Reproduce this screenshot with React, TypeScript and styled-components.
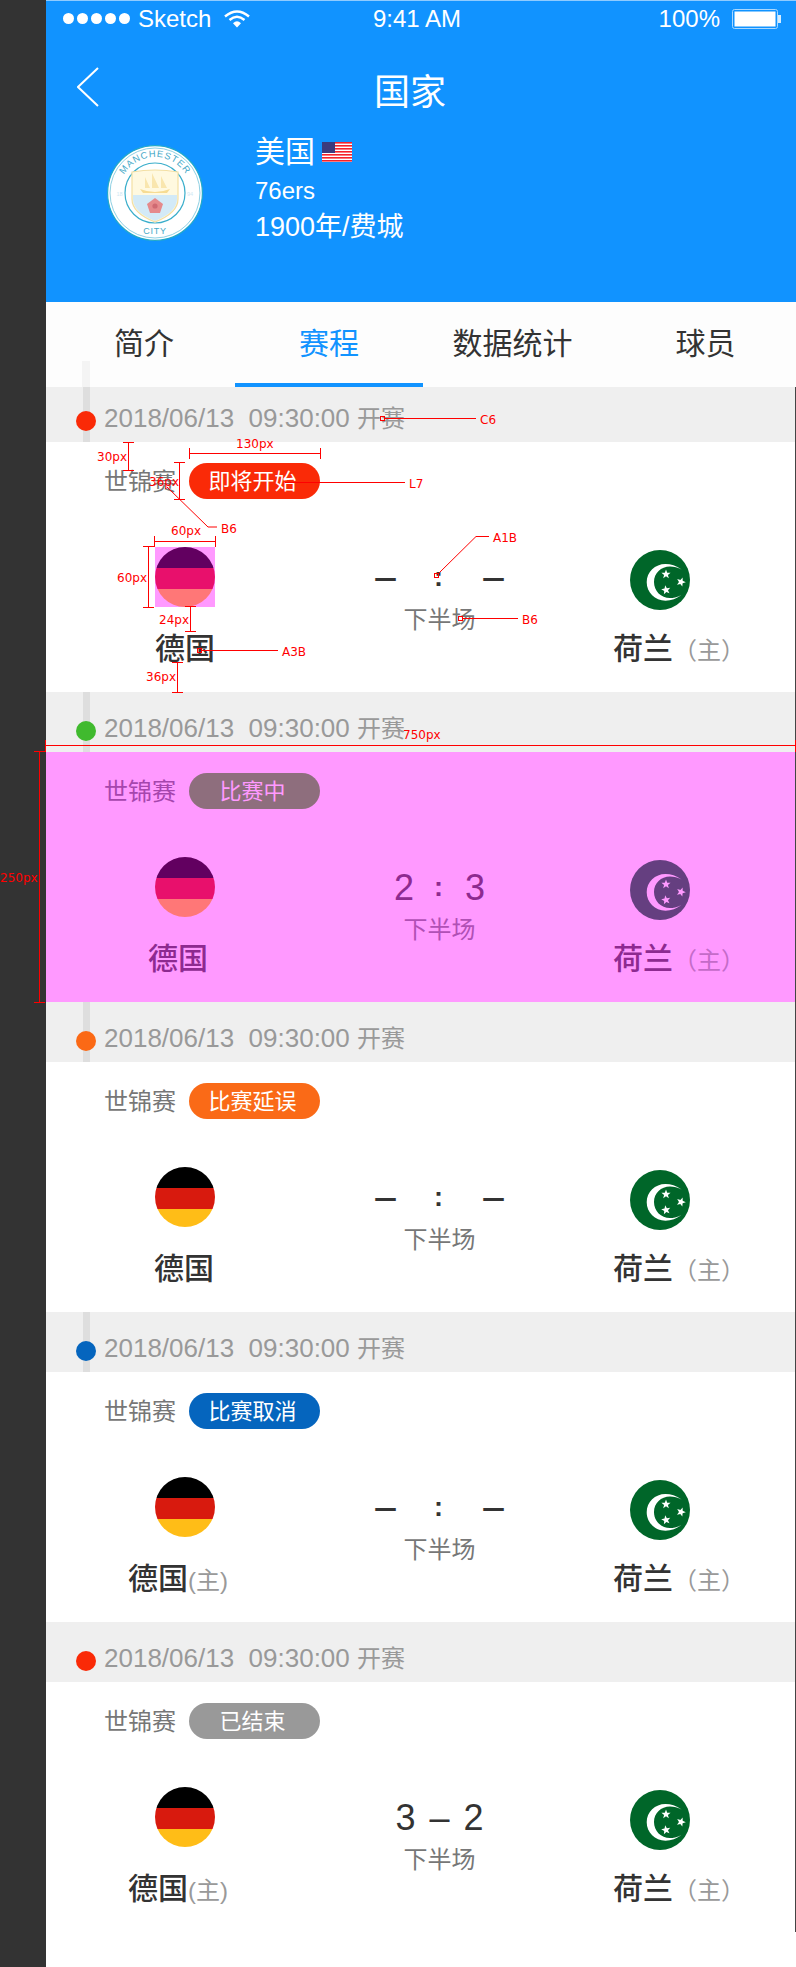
import React from 'react';
import styled, { createGlobalStyle } from 'styled-components';

const FONT = '"Liberation Sans", "Noto Sans CJK SC", sans-serif';

const GlobalStyle = createGlobalStyle`
  html, body { margin: 0; padding: 0; background: #333; }
  * { box-sizing: border-box; }
`;

const Page = styled.div`
  position: relative;
  width: 796px;
  height: 1967px;
  padding-left: 46px;
  background: #333;
  font-family: ${FONT};
  overflow: hidden;
`;

const Phone = styled.div`
  width: 750px;
  height: 1967px;
  background: #fff;
`;

const Header = styled.header`
  height: 302px;
  background: #1193ff;
  border-top: 1px solid #8fcbff;
  color: #fff;
`;

const StatusBar = styled.div`
  display: grid;
  grid-template-columns: 327px auto 1fr;
  align-items: center;
  height: 35px;
  margin-bottom: 2px;
  font-size: 24px;
`;

const StatusLeft = styled.div`
  display: flex;
  align-items: center;
  padding-left: 17px;
`;

const SignalDots = styled.div`
  display: flex;
  gap: 3px;
  margin-right: 8px;
`;

const SignalDot = styled.span`
  width: 11px;
  height: 11px;
  border-radius: 50%;
  background: #fff;
`;

const Carrier = styled.span`
  margin-right: 13px;
`;

const StatusRight = styled.div`
  display: flex;
  align-items: center;
  justify-content: flex-end;
  gap: 12px;
  padding-right: 15px;
`;

const Nav = styled.div`
  display: grid;
  grid-template-columns: 328px auto;
  height: 96px;
`;

const BackCell = styled.div`
  padding: 29px 0 0 31px;
`;

const Title = styled.h1`
  margin: 0;
  padding-top: 33px;
  font-size: 36px;
  line-height: 44px;
  font-weight: 400;
`;

const TeamHero = styled.div`
  display: flex;
  gap: 52px;
  padding-left: 61px;
`;

const LogoWrap = styled.div`
  width: 96px;
  height: 96px;
  margin-top: 11px;
`;

const HeroInfo = styled.div`
  display: flex;
  flex-direction: column;
`;

const HeroName = styled.div`
  display: flex;
  align-items: center;
  gap: 7px;
  font-size: 30px;
  line-height: 36px;
  margin-bottom: 1px;
`;

const HeroLine = styled.div<{ $size: number }>`
  margin-top: 4px;
  font-size: ${(p) => p.$size}px;
  line-height: 32px;
`;

const Tabs = styled.nav`
  position: relative;
  display: grid;
  grid-template-columns: 189px 188px 179px 194px;
  height: 85px;
  background: #fdfdfd;
  &::before {
    content: '';
    position: absolute;
    left: 36px;
    top: 59px;
    width: 8px;
    height: 26px;
    background: #f4f4f4;
  }
`;

const Tab = styled.div<{ $active?: boolean; $shift?: number }>`
  position: relative;
  padding: 24px 0 0 ${(p) => p.$shift ?? 0}px;
  text-align: center;
  font-size: 30px;
  line-height: 36px;
  color: ${(p) => (p.$active ? '#1193ff' : '#333')};
  border-bottom: 4px solid ${(p) => (p.$active ? '#1193ff' : 'transparent')};
`;

const Content = styled.main`
  border-right: 1px solid #444;
`;

const DateBar = styled.div<{ $first?: boolean; $line?: boolean }>`
  position: relative;
  display: flex;
  align-items: flex-end;
  height: ${(p) => (p.$first ? 55 : 60)}px;
  padding: 0 0 5px 30px;
  background: #efefef;
  &::before {
    content: '';
    display: ${(p) => (p.$line ? 'block' : 'none')};
    position: absolute;
    left: 37px;
    top: 0;
    width: 7px;
    height: 100%;
    background: #dedede;
  }
`;

const StatusDot = styled.span<{ $color: string }>`
  position: relative;
  width: 20px;
  height: 20px;
  margin: 0 8px 6px 0;
  border-radius: 50%;
  background: ${(p) => p.$color};
`;

const DateText = styled.span`
  position: relative;
  font-size: 26px;
  line-height: 36px;
  color: #999;
  white-space: pre;
  & > b {
    font-size: 24px;
    font-weight: 400;
  }
`;

const Row = styled.section<{ $tinted?: boolean }>`
  height: 250px;
  padding-top: 21px;
  background: ${(p) => (p.$tinted ? '#ff99ff' : '#fff')};
`;

const MetaRow = styled.div`
  display: flex;
  align-items: center;
  height: 36px;
  padding-left: 58px;
  gap: 13px;
`;

const League = styled.span<{ $tinted?: boolean }>`
  padding-top: 2px;
  font-size: 24px;
  line-height: 36px;
  color: ${(p) => (p.$tinted ? '#a646ad' : '#777')};
`;

const Pill = styled.span<{ $bg: string; $fg?: string }>`
  width: 131px;
  height: 36px;
  padding-right: 4px;
  border-radius: 18px;
  background: ${(p) => p.$bg};
  color: ${(p) => p.$fg ?? '#fff'};
  font-size: 22px;
  line-height: 37px;
  text-align: center;
`;

const Teams = styled.div`
  display: grid;
  grid-template-columns: 278px 231px 1fr;
`;

const TeamCol = styled.div<{ $top: number; $flagLeft: number }>`
  display: flex;
  flex-direction: column;
  padding-top: ${(p) => p.$top}px;
  & > .flag {
    margin-left: ${(p) => p.$flagLeft}px;
  }
`;

const FlagBox = styled.div<{ $highlight?: boolean }>`
  width: 60px;
  height: 60px;
  background: ${(p) => (p.$highlight ? '#ff99ff' : 'transparent')};
`;

const StripedFlag = styled.div<{ $colors: string[] }>`
  width: 60px;
  height: 60px;
  border-radius: 50%;
  background: linear-gradient(
    to bottom,
    ${(p) => p.$colors[0]} 0 35%,
    ${(p) => p.$colors[1]} 35% 70.5%,
    ${(p) => p.$colors[2]} 70.5% 100%
  );
`;

const TeamName = styled.div<{ $left: number; $offset: number; $tinted?: boolean }>`
  margin: ${(p) => p.$offset}px 0 0 ${(p) => p.$left}px;
  font-size: 30px;
  line-height: 36px;
  font-weight: 500;
  color: ${(p) => (p.$tinted ? '#8d2a90' : '#333')};
  white-space: pre;
`;

const HomeMark = styled.span<{ $tinted?: boolean }>`
  font-size: 24px;
  font-weight: 400;
  color: ${(p) => (p.$tinted ? '#c46bc8' : '#999')};
`;

const Center = styled.div`
  display: flex;
  flex-direction: column;
  align-items: center;
  padding-top: 57px;
`;

const Score = styled.div<{ $gap: number; $tinted?: boolean }>`
  display: flex;
  align-items: center;
  justify-content: center;
  gap: ${(p) => p.$gap}px;
  height: 44px;
  font-size: 36px;
  line-height: 44px;
  color: ${(p) => (p.$tinted ? '#8d2a90' : '#333')};
`;

const Dash = styled.span`
  font-family: 'DejaVu Sans', sans-serif;
  font-size: 23px;
  font-weight: 700;
  line-height: 44px;
`;

const Colon = styled.span`
  font-size: 27px;
  font-weight: 700;
  line-height: 44px;
  margin: -3px 1px 0 -1px;
`;

const Period = styled.div<{ $tinted?: boolean }>`
  margin-top: 2px;
  font-size: 24px;
  line-height: 36px;
  color: ${(p) => (p.$tinted ? '#b050b5' : '#777')};
`;

const Overlay = styled.svg`
  position: absolute;
  left: 0;
  top: 0;
  pointer-events: none;
`;

const MarkText = styled.text`
  font-family: 'DejaVu Sans', sans-serif;
  font-size: 12px;
  fill: #f00;
`;

const GERMANY = ['#000000', '#d81a0e', '#ffbd17'];
const PURPLE = ['#620060', '#e8106c', '#ff7777'];

const star = (cx: number, cy: number, r: number, rot: number) => {
  const pts: string[] = [];
  for (let i = 0; i < 10; i++) {
    const rad = i % 2 === 0 ? r : r * 0.42;
    const a = ((-90 + rot + i * 36) * Math.PI) / 180;
    pts.push(`${(cx + rad * Math.cos(a)).toFixed(2)},${(cy + rad * Math.sin(a)).toFixed(2)}`);
  }
  return pts.join(' ');
};

function CrescentFlag({ bg, fg }: { bg: string; fg: string }) {
  return (
    <svg width="60" height="60" viewBox="0 0 60 60" style={{ display: 'block' }}>
      <circle cx="30" cy="30" r="30" fill={bg} />
      <path
        d="M51.5 19.5 C46 15.5 41 14 35.5 14 C25 14 16.7 22 16.7 32.3 C16.7 42.5 25 50.7 35.5 50.7 C41 50.7 47 48.5 51.5 45 C47 47.5 43 48 40 48 C31 48 24 41 24 32 C24 23 31 16.5 40 16.5 C44 16.5 48 17.5 51.5 19.5 Z"
        fill={fg}
      />
      <polygon points={star(36, 24.3, 4.8, 0)} fill={fg} />
      <polygon points={star(51, 32, 4.8, 20)} fill={fg} />
      <polygon points={star(36, 40, 4.8, -10)} fill={fg} />
    </svg>
  );
}

function CityLogo() {
  return (
    <svg width="96" height="96" viewBox="0 0 96 96" style={{ display: 'block' }}>
      <defs>
        <path id="arcTop" d="M 12.5 54 A 36 36 0 1 1 83.5 54" fill="none" />
      </defs>
      <circle cx="48" cy="48" r="47.4" fill="#fff" stroke="#22a9c8" strokeWidth="1.2" />
      <circle cx="48" cy="48" r="45" fill="#fff" stroke="#8ed0e3" strokeWidth="1" />
      <circle cx="48" cy="48" r="30" fill="#fff" stroke="#3aaecb" strokeWidth="1.2" />
      <text fontFamily="Liberation Sans, sans-serif" fontSize="9.4" fill="#45a9c7" letterSpacing="0.9">
        <textPath href="#arcTop" startOffset="50%" textAnchor="middle">MANCHESTER</textPath>
      </text>
      <text x="48" y="89" textAnchor="middle" fontFamily="Liberation Sans, sans-serif" fontSize="9" fill="#45a9c7" letterSpacing="0.8">CITY</text>
      <text x="9.5" y="51" fontFamily="Liberation Sans, sans-serif" fontSize="5.5" fill="#cfe8f3">18</text>
      <text x="80" y="51" fontFamily="Liberation Sans, sans-serif" fontSize="5.5" fill="#cfe8f3">94</text>
      <path d="M25 27 Q48 23 71 27 L71 54 Q71 68 48 77 Q25 68 25 54 Z" fill="#fff9e0" stroke="#f3dfa3" strokeWidth="1.2" />
      <path d="M26 50 L70 50 L70 54 Q70 67 48 76 Q26 67 26 54 Z" fill="#d3eaf7" />
      <path d="M33 44 Q48 50 63 44 L60 48 L36 48 Z" fill="#f6dc94" />
      <path d="M38 43 L38 32 L43 43 Z M45 43 L45 28 L52 43 Z M54 43 L54 31 L60 43 Z" fill="#f9e6ae" />
      <polygon points="48,53 56,59 53,68 43,68 40,59" fill="#e58a8c" />
      <circle cx="48" cy="61" r="2.6" fill="#cf6a72" />
    </svg>
  );
}

function UsFlag() {
  const stripes = [0, 1, 2, 3, 4, 5, 6];
  return (
    <svg width="30" height="20" viewBox="0 0 30 20" style={{ display: 'block' }}>
      <rect width="30" height="20" fill="#fff" />
      {stripes.map((i) => (
        <rect key={i} y={i * 3} width="30" height="1.6" fill="#f5222a" />
      ))}
      <rect width="13" height="11" fill="#3c3b7e" />
    </svg>
  );
}

function Wifi() {
  return (
    <svg width="26" height="18" viewBox="0 0 26 18" style={{ display: 'block' }}>
      <path d="M1 6.5 Q13 -3.5 25 6.5" fill="none" stroke="#fff" strokeWidth="2.4" />
      <path d="M5.5 10 Q13 3.5 20.5 10" fill="none" stroke="#fff" strokeWidth="2.4" />
      <path d="M9 13.2 Q13 9.2 17 13.2 L13 17.5 Z" fill="#fff" />
    </svg>
  );
}

function Battery() {
  return (
    <svg width="49" height="20" viewBox="0 0 49 20" style={{ display: 'block' }}>
      <rect x="0.5" y="0.5" width="45" height="19" rx="2" fill="none" stroke="#a9d8ff" strokeWidth="1" />
      <rect x="2.5" y="2.5" width="41" height="15" fill="#fff" />
      <rect x="46" y="6" width="3" height="8" fill="#d6edff" />
    </svg>
  );
}

function Back() {
  return (
    <svg width="22" height="40" viewBox="0 0 22 40" style={{ display: 'block' }}>
      <polyline points="21,1 1,20 21,39" fill="none" stroke="#fff" strokeWidth="2" />
    </svg>
  );
}

type Match = {
  dot: string;
  line: boolean;
  pill: string;
  pillBg: string;
  pillFg?: string;
  tinted?: boolean;
  highlight?: boolean;
  colors: string[];
  leftName: number;
  leftHome?: boolean;
  score: 'none' | 'colon' | 'dash';
  values: [string, string];
  gap: number;
};

const matches: Match[] = [
  { dot: '#fa2a07', line: true, pill: '即将开始', pillBg: '#fa2a07', highlight: true, colors: PURPLE, leftName: 109, score: 'none', values: ['', ''], gap: 38 },
  { dot: '#40ba2e', line: true, pill: '比赛中', pillBg: '#8e6e7d', pillFg: '#ff99ff', tinted: true, colors: PURPLE, leftName: 102, score: 'colon', values: ['2', '3'], gap: 21 },
  { dot: '#fb6915', line: true, pill: '比赛延误', pillBg: '#fa6a17', colors: GERMANY, leftName: 108, score: 'none', values: ['', ''], gap: 38 },
  { dot: '#0565be', line: true, pill: '比赛取消', pillBg: '#0565be', colors: GERMANY, leftName: 82, leftHome: true, score: 'none', values: ['', ''], gap: 38 },
  { dot: '#fa2a07', line: false, pill: '已结束', pillBg: '#999', colors: GERMANY, leftName: 82, leftHome: true, score: 'dash', values: ['3', '2'], gap: 14 },
];

function ScoreLine({ m }: { m: Match }) {
  if (m.score === 'none') {
    return (
      <Score $gap={m.gap}>
        <Dash>—</Dash>
        <Colon>:</Colon>
        <Dash>—</Dash>
      </Score>
    );
  }
  return (
    <Score $gap={m.gap} $tinted={m.tinted}>
      <span>{m.values[0]}</span>
      {m.score === 'colon' ? <Colon>:</Colon> : <span>–</span>}
      <span>{m.values[1]}</span>
    </Score>
  );
}

function Line({ x1, y1, x2, y2 }: { x1: number; y1: number; x2: number; y2: number }) {
  return <line x1={x1} y1={y1} x2={x2} y2={y2} stroke="#f00" strokeWidth="1" />;
}

function VMeasure({ x, y1, y2, tick = 5 }: { x: number; y1: number; y2: number; tick?: number }) {
  return (
    <g>
      <Line x1={x + 0.5} y1={y1} x2={x + 0.5} y2={y2} />
      <Line x1={x - tick} y1={y1 + 0.5} x2={x + tick + 1} y2={y1 + 0.5} />
      <Line x1={x - tick} y1={y2 + 0.5} x2={x + tick + 1} y2={y2 + 0.5} />
    </g>
  );
}

function HMeasure({ y, x1, x2 }: { y: number; x1: number; x2: number }) {
  return (
    <g>
      <Line x1={x1} y1={y + 0.5} x2={x2} y2={y + 0.5} />
      <Line x1={x1 + 0.5} y1={y - 5} x2={x1 + 0.5} y2={y + 6} />
      <Line x1={x2 + 0.5} y1={y - 5} x2={x2 + 0.5} y2={y + 6} />
    </g>
  );
}

function Square({ x, y, s = 4 }: { x: number; y: number; s?: number }) {
  return <rect x={x + 0.5} y={y + 0.5} width={s} height={s} fill="none" stroke="#f00" strokeWidth="1" />;
}

function Annotations() {
  return (
    <Overlay width="796" height="1967" viewBox="0 0 796 1967">
      <VMeasure x={128} y1={442} y2={470} />
      <MarkText x={97} y={461}>30px</MarkText>
      <HMeasure y={453} x1={189} x2={320} />
      <MarkText x={236} y={448}>130px</MarkText>
      <VMeasure x={179} y1={462} y2={499} />
      <MarkText x={149} y={486}>36px</MarkText>
      <polyline points="167,487 208,527 217,527" fill="none" stroke="#f00" strokeWidth="1" />
      <MarkText x={221} y={533}>B6</MarkText>
      <HMeasure y={541} x1={154} x2={215} />
      <MarkText x={171} y={535}>60px</MarkText>
      <VMeasure x={148} y1={546} y2={607} />
      <MarkText x={117} y={582}>60px</MarkText>
      <VMeasure x={190} y1={606} y2={631} />
      <MarkText x={159} y={624}>24px</MarkText>
      <VMeasure x={177} y1={662} y2={692} />
      <MarkText x={146} y={681}>36px</MarkText>
      <Square x={197} y={648} />
      <Line x1={202} y1={650.5} x2={278} y2={650.5} />
      <MarkText x={282} y={656}>A3B</MarkText>
      <Square x={380} y={416} />
      <Line x1={385} y1={418.5} x2={476} y2={418.5} />
      <MarkText x={480} y={424}>C6</MarkText>
      <Line x1={285} y1={482.5} x2={405} y2={482.5} />
      <MarkText x={409} y={488}>L7</MarkText>
      <Square x={434} y={573} />
      <polyline points="439,573 476,536.5 489,536.5" fill="none" stroke="#f00" strokeWidth="1" />
      <MarkText x={493} y={542}>A1B</MarkText>
      <Square x={458} y={616} />
      <Line x1={463} y1={618.5} x2={518} y2={618.5} />
      <MarkText x={522} y={624}>B6</MarkText>
      <Line x1={46} y1={745.5} x2={796} y2={745.5} />
      <Line x1={45.5} y1={740} x2={45.5} y2={752} />
      <Line x1={795.5} y1={740} x2={795.5} y2={752} />
      <MarkText x={403} y={739}>750px</MarkText>
      <VMeasure x={39} y1={751} y2={1002} />
      <MarkText x={0} y={882}>250px</MarkText>
    </Overlay>
  );
}

export default function App() {
  return (
    <>
      <GlobalStyle />
      <Page>
        <Phone>
          <Header>
            <StatusBar>
              <StatusLeft>
                <SignalDots>
                  {[0, 1, 2, 3, 4].map((i) => (
                    <SignalDot key={i} />
                  ))}
                </SignalDots>
                <Carrier>Sketch</Carrier>
                <Wifi />
              </StatusLeft>
              <span>9:41 AM</span>
              <StatusRight>
                <span>100%</span>
                <Battery />
              </StatusRight>
            </StatusBar>
            <Nav>
              <BackCell>
                <Back />
              </BackCell>
              <Title>国家</Title>
            </Nav>
            <TeamHero>
              <LogoWrap>
                <CityLogo />
              </LogoWrap>
              <HeroInfo>
                <HeroName>
                  美国
                  <UsFlag />
                </HeroName>
                <HeroLine $size={24}>76ers</HeroLine>
                <HeroLine $size={27}>1900年/费城</HeroLine>
              </HeroInfo>
            </TeamHero>
          </Header>
          <Tabs>
            <Tab $shift={7}>简介</Tab>
            <Tab $active>赛程</Tab>
            <Tab>数据统计</Tab>
            <Tab $shift={13}>球员</Tab>
          </Tabs>
          <Content>
            {matches.map((m, i) => (
              <React.Fragment key={i}>
                <DateBar $first={i === 0} $line={m.line}>
                  <StatusDot $color={m.dot} />
                  <DateText>
                    {'2018/06/13  09:30:00 '}
                    <b>开赛</b>
                  </DateText>
                </DateBar>
                <Row $tinted={m.tinted}>
                  <MetaRow>
                    <League $tinted={m.tinted}>世锦赛</League>
                    <Pill $bg={m.pillBg} $fg={m.pillFg}>{m.pill}</Pill>
                  </MetaRow>
                  <Teams>
                    <TeamCol $top={48} $flagLeft={109}>
                      <FlagBox className="flag" $highlight={m.highlight}>
                        <StripedFlag $colors={m.colors} />
                      </FlagBox>
                      <TeamName $left={m.leftName} $offset={24} $tinted={m.tinted}>
                        德国
                        {m.leftHome && <HomeMark>(主)</HomeMark>}
                      </TeamName>
                    </TeamCol>
                    <Center>
                      <ScoreLine m={m} />
                      <Period $tinted={m.tinted}>下半场</Period>
                    </Center>
                    <TeamCol $top={51} $flagLeft={75}>
                      <div className="flag">
                        {m.tinted ? <CrescentFlag bg="#653f80" fg="#ff99ff" /> : <CrescentFlag bg="#006629" fg="#ffffff" />}
                      </div>
                      <TeamName $left={58} $offset={21} $tinted={m.tinted}>
                        荷兰
                        <HomeMark $tinted={m.tinted}>（主）</HomeMark>
                      </TeamName>
                    </TeamCol>
                  </Teams>
                </Row>
              </React.Fragment>
            ))}
          </Content>
        </Phone>
        <Annotations />
      </Page>
    </>
  );
}
